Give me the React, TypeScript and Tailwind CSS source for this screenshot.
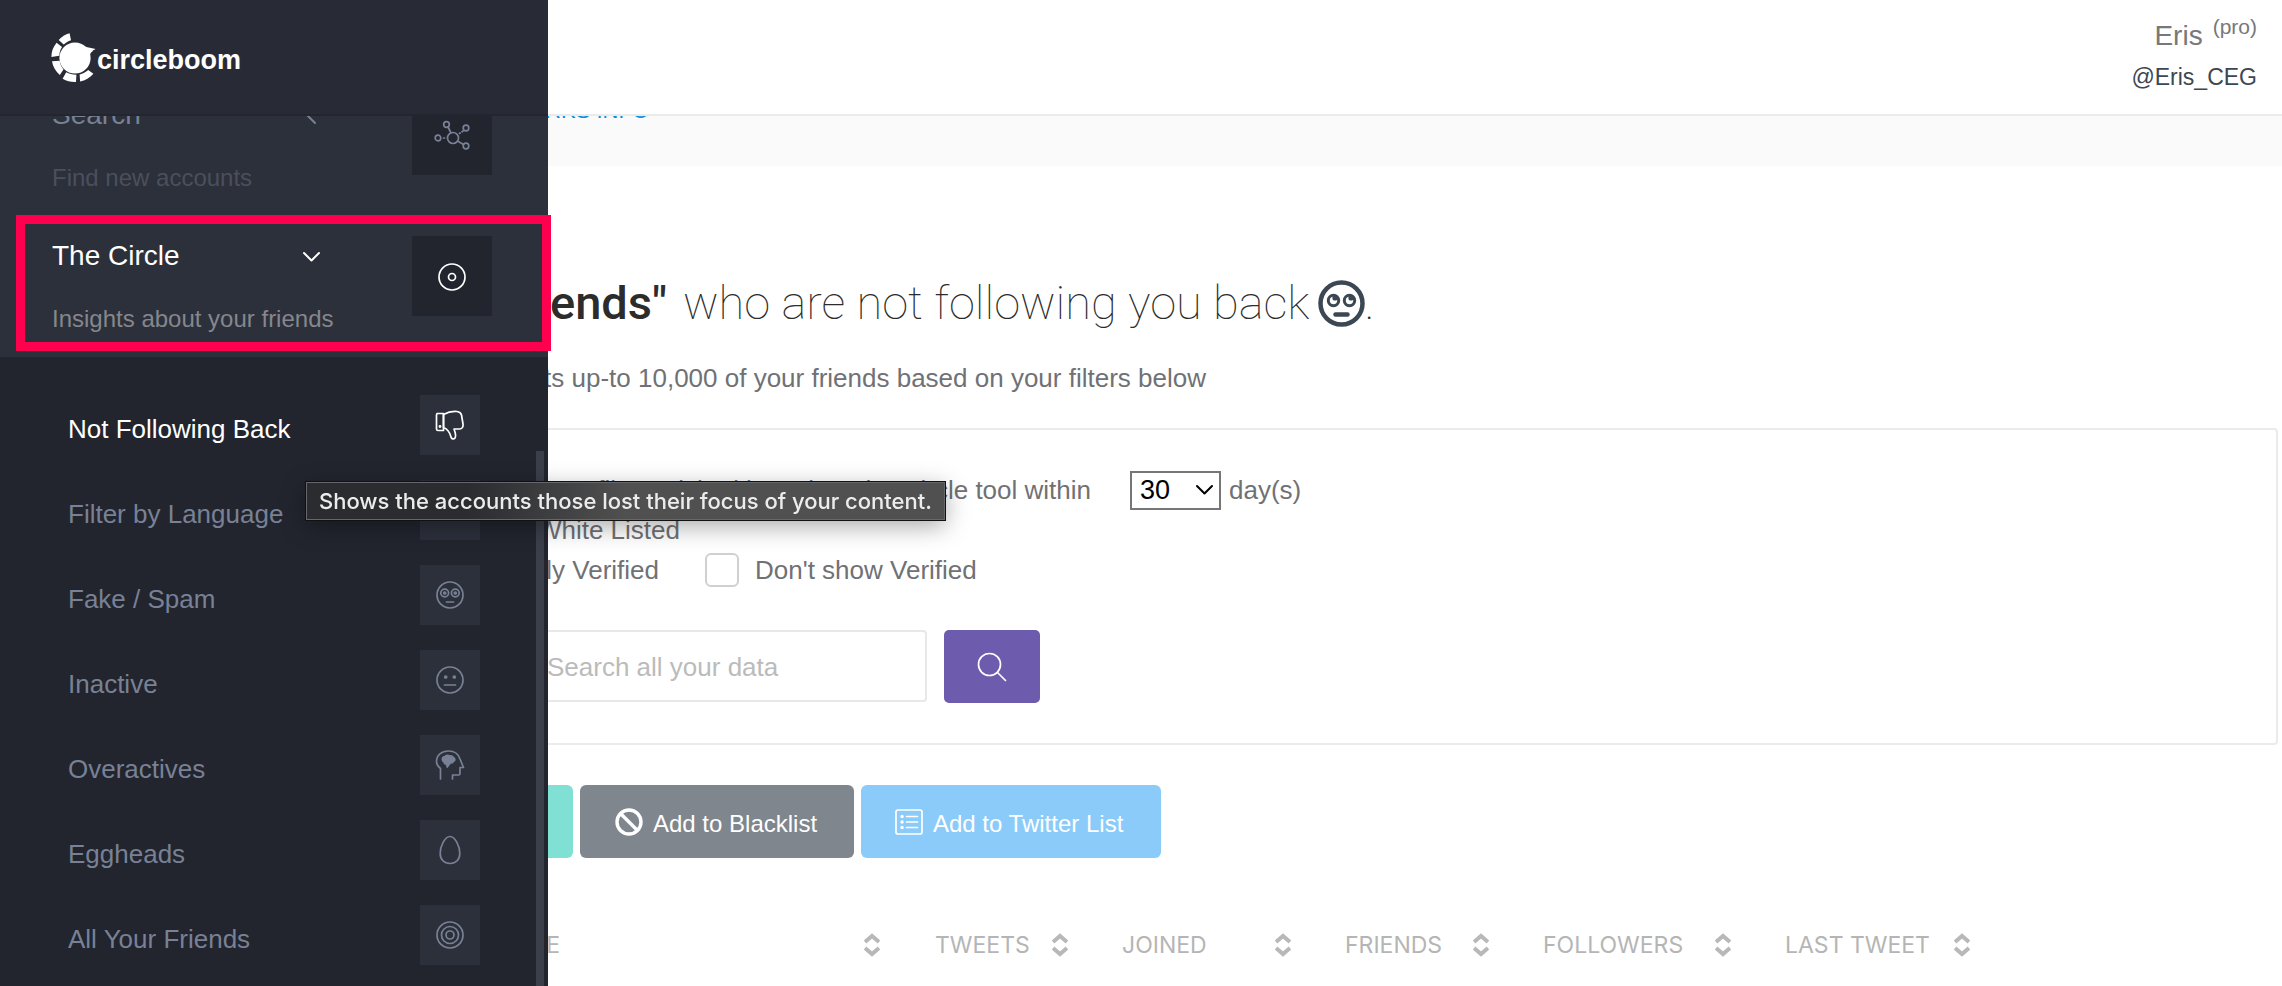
import { ReactNode } from 'react';

interface IconProps {
  className?: string;
}

const stroke = {
  fill: 'none',
  stroke: 'currentColor',
  strokeWidth: 1.7,
  strokeLinecap: 'round' as const,
  strokeLinejoin: 'round' as const,
};

function LogoMark() {
  return (
    <svg className="w-12 h-[54px] shrink-0" viewBox="0 0 48 54" fill="white">
      <circle cx="26" cy="27" r="15.6" />
      <path d="M33 14.5c3 1.3 7 2 13.5 3.500c-1.500 1-3.500 1.200-3 2.500c-1.800 1-2.700 2.500-2.800 4.500z" />
      <path d="M20.600 2.300 22 9.200c-3 .9-5 2.200-7.300 4.400l-5-4.600c3-3.300 6.500-5.700 10.900-6.700z" />
      <path d="M7.600 11.800l5.400 4.200c-1.700 2.800-2.500 5.300-2.700 8.700l-7.900 1.300c0-5.400 1.800-10.200 5.200-14.200z" />
      <path d="M3 30.300l7.600-.6c.6 3.500 1.800 6.200 3.900 8.700l-3.700 5.600c-4.200-3.700-6.900-8.300-7.800-13.700z" />
      <path d="M17.200 41.200c2.900 1.600 6.300 2.500 10.200 2.500l-.4 7.400c-5 .2-9.200-.9-13.400-3.300z" />
      <path d="M30.600 43.400c3.400-.8 6-2.200 8.600-4.500l5.200 3.800c-3.600 4.200-8 6.800-13.300 7.900z" />
    </svg>
  );
}

function NetworkIcon() {
  return (
    <svg className="w-9 h-8" viewBox="0 0 36 32" {...stroke}>
      <circle cx="19" cy="18" r="5.500" />
      <circle cx="4" cy="18" r="2.800" />
      <circle cx="12.500" cy="4.500" r="2.800" />
      <circle cx="32" cy="8" r="2.800" />
      <circle cx="32" cy="26" r="2.800" />
      <path d="M14 7l3 6M23.500 21l6 3.500M9.500 18h1M25.500 13.500l.6-.5M28 11.800l1-.8" />
    </svg>
  );
}

function DiscIcon() {
  return (
    <svg className="w-7 h-7" viewBox="0 0 28 28" {...stroke}>
      <circle cx="14" cy="14" r="13" />
      <circle cx="14" cy="14" r="3.500" />
    </svg>
  );
}

function ThumbDownIcon() {
  return (
    <svg className="w-[30px] h-[30px]" viewBox="0 0 30 30" {...stroke}>
      <path d="M2 3.500h6.500v17H3a1.500 1.500 0 0 1-1.500-1.500V5z" />
      <path d="M8.500 4.500C13 2 17 1 22 1.500c2.500.3 4 1.500 4.500 3.500l1.500 9c.4 3-1 5-3.500 5H19c1.500 4 2.500 6.500 1 9-1.300 1.700-3.500 1-4-1-1-4-3.500-8-7.500-9.500z" />
      <circle cx="5" cy="16.500" r="0.600" />
    </svg>
  );
}

function LanguageIcon() {
  return (
    <svg className="w-[18px] h-[18px]" viewBox="0 0 28 28" {...stroke}>
      <circle cx="14" cy="14" r="13" />
      <path d="M1 14h26M14 1c-8 8-8 18 0 26M14 1c8 8 8 18 0 26" />
    </svg>
  );
}

function SpamIcon() {
  return (
    <svg className="w-7 h-7" viewBox="0 0 28 28" {...stroke}>
      <circle cx="14" cy="14" r="13" />
      <circle cx="8.700" cy="12" r="3.900" />
      <circle cx="19.300" cy="12" r="3.900" />
      <circle cx="8.700" cy="12" r="1" />
      <circle cx="19.300" cy="12" r="1" />
      <path d="M10.500 21h7" />
    </svg>
  );
}

function InactiveIcon() {
  return (
    <svg className="w-7 h-7" viewBox="0 0 28 28" {...stroke}>
      <circle cx="14" cy="14" r="13" />
      <circle cx="9.700" cy="11" r="1" fill="currentColor" />
      <circle cx="18.300" cy="11" r="1" fill="currentColor" />
      <path d="M8.500 19h11" />
    </svg>
  );
}

function HeadIcon() {
  return (
    <svg className="w-[30px] h-[30px]" viewBox="0 0 30 30" {...stroke}>
      <path d="M5.500 29V18.500C3 16.500 1.500 14.500 1.500 11.500C1.500 5 6.500 1 13.500 1C20 1 23.500 4 25 9l3.500 8.500H25v6c0 1-.5 1.500-1.500 1.500H17.500v4" />
      <path
        d="M7.500 10c-.5-2.500 1-3.500 2.500-3.500c1-1.500 3.500-1.500 4.500-.5c2-.5 3.500.5 3.700 1.500c2.300.7 2 3.500.2 4c-.6 1.500-2.400 1.500-3.200 1.500l-3 4-.5-3c-1 0-2.500-.5-2.500-2c-1-.3-1.700-1-1.700-2z"
        fill="currentColor"
      />
    </svg>
  );
}

function EggIcon() {
  return (
    <svg className="w-[22px] h-[30px]" viewBox="0 0 22 30" {...stroke}>
      <path d="M11 1.500C6 1.500 1.200 11 1.200 18.500C1.200 24.500 5 28.500 11 28.500S20.800 24.500 20.800 18.500C20.800 11 16 1.500 11 1.500z" />
    </svg>
  );
}

function TargetIcon() {
  return (
    <svg className="w-7 h-7" viewBox="0 0 28 28" {...stroke}>
      <circle cx="14" cy="14" r="13" />
      <circle cx="14" cy="14" r="8.500" />
      <circle cx="14" cy="14" r="4" />
    </svg>
  );
}

function Chevron({ className }: IconProps) {
  return (
    <svg className={`w-[17px] h-[17px] ${className ?? ''}`} viewBox="0 0 17 17" {...stroke} strokeWidth={2}>
      <path d="M1 5l7.500 7.500L16 5" />
    </svg>
  );
}

function EyesFace() {
  return (
    <svg className="w-[47px] h-[47px] ml-2" viewBox="0 0 47 47" fill="none" stroke="#3b4752">
      <circle cx="23.500" cy="23.500" r="21" strokeWidth="4.500" />
      <circle cx="15.500" cy="20.500" r="5.200" strokeWidth="3" />
      <circle cx="31.500" cy="20.500" r="5.200" strokeWidth="3" />
      <circle cx="17" cy="18" r="2.600" fill="#3b4752" stroke="none" />
      <circle cx="33" cy="18" r="2.600" fill="#3b4752" stroke="none" />
      <path d="M17.500 34.500h12" strokeWidth="4.500" strokeLinecap="round" />
    </svg>
  );
}

function SortIcon() {
  return (
    <svg className="w-4 h-6" viewBox="0 0 16 24" fill="none" stroke="#b8b8b8" strokeWidth="4">
      <path d="M1 9L8 3l7 6M1 15l7 6 7-6" />
    </svg>
  );
}

const menu = [
  { title: 'Search', text: 'Find new accounts', icon: <NetworkIcon />, open: false },
  { title: 'The Circle', text: 'Insights about your friends', icon: <DiscIcon />, open: true },
];

const circleMenu: { label: string; icon: ReactNode; active?: boolean }[] = [
  { label: 'Not Following Back', icon: <ThumbDownIcon />, active: true },
  { label: 'Filter by Language', icon: <LanguageIcon /> },
  { label: 'Fake / Spam', icon: <SpamIcon /> },
  { label: 'Inactive', icon: <InactiveIcon /> },
  { label: 'Overactives', icon: <HeadIcon /> },
  { label: 'Eggheads', icon: <EggIcon /> },
  { label: 'All Your Friends', icon: <TargetIcon /> },
];

const columns = [
  { label: 'TWEETS', width: 'w-[187px]' },
  { label: 'JOINED', width: 'w-[223px]' },
  { label: 'FRIENDS', width: 'w-[198px]' },
  { label: 'FOLLOWERS', width: 'w-[242px]' },
  { label: 'LAST TWEET', width: 'w-[239px]' },
];

function Sidebar() {
  return (
    <aside className="fixed inset-y-0 left-0 z-20 w-[548px] bg-[#22252e] overflow-hidden">
      <div className="relative z-10 h-[116px] bg-[#282b36] border-b-2 border-[#23262f] flex items-start pl-[49px] pt-[31px]">
        <a href="#" className="flex items-start">
          <LogoMark />
          <span className="pt-1 font-['Liberation_Sans',sans-serif] font-bold text-[27px] leading-[50px] text-white">circleboom</span>
        </a>
      </div>

      <nav className="-mt-[41px]">
        <ul className="bg-[#2c303b]">
          {menu.map((item) => (
            <li key={item.title} className="h-[141px] pl-[52px] pr-14 pt-5">
              <a href="#" className="flex justify-between">
                <div className="w-[268px]">
                  <div className={`flex items-center justify-between text-[28px] leading-10 ${item.open ? 'text-white' : 'text-[#788195]'}`}>
                    {item.title}
                    <Chevron className={item.open ? '' : 'rotate-90'} />
                  </div>
                  <div className={`mt-[23px] text-[24px] leading-10 whitespace-nowrap ${item.open ? 'text-[#85878d]' : 'text-[#4b4f5c]'}`}>{item.text}</div>
                </div>
                <span className={`w-20 h-20 pt-[2px] bg-[#22252e] flex items-center justify-center ${item.open ? 'text-white' : 'text-[#788195]'}`}>
                  {item.icon}
                </span>
              </a>
            </li>
          ))}
        </ul>
        <ul className="pt-[38px] px-[68px] flex flex-col gap-[25px]">
          {circleMenu.map((item) => (
            <li key={item.label}>
              <a href="#" className={`flex items-center justify-between ${item.active ? 'text-white' : 'text-[#788195]'}`}>
                <span className="text-[26px] leading-[52px] pt-2">{item.label}</span>
                <span className="w-[60px] h-[60px] bg-[#2c303b] flex items-center justify-center">{item.icon}</span>
              </a>
            </li>
          ))}
        </ul>
      </nav>

      <div className="absolute right-1 top-[451px] bottom-0 w-2 bg-[#3a3f4a]" />
    </aside>
  );
}

function Header() {
  return (
    <header className="fixed top-0 inset-x-0 z-10 h-[116px] bg-white border-b-2 border-[#ebebeb] flex justify-end pr-[25px] pt-[15px]">
      <div className="text-right">
        <div className="flex justify-end items-start gap-[10px] text-[#77787b]">
          <span className="text-[28px] leading-[42px]">Eris</span>
          <span className="text-[21px] leading-[24px]">(pro)</span>
        </div>
        <a href="#" className="block text-[23px] leading-10 text-[#3b4752]">@Eris_CEG</a>
      </div>
    </header>
  );
}

function Filters() {
  return (
    <form className="mt-[30px] mr-1 border-2 border-[#ebebeb] rounded-sm pt-10 pb-10 text-[26px] leading-10">
      <div className="flex items-start">
        <label htmlFor="days" className="w-[849px] text-right">Don't show profiles I visited by using The Circle tool within</label>
        <div className="relative ml-[39px] w-[91px] h-[39px]">
          <select id="days" defaultValue="30" className="appearance-none w-full h-full border-2 border-[#767676] bg-white text-black text-[27px] leading-[35px] pl-2">
            <option>30</option>
            <option>60</option>
            <option>90</option>
          </select>
          <Chevron className="absolute right-2 top-[11px] text-black pointer-events-none" />
        </div>
        <span className="ml-2">day(s)</span>
      </div>
      <div className="w-[438px] flex justify-end">
        <label htmlFor="white">Don't show White Listed</label>
        <input id="white" type="checkbox" className="sr-only" />
      </div>
      <div className="flex items-center">
        <div className="w-[417px] flex justify-end">
          <input id="only" type="checkbox" className="sr-only" />
          <label htmlFor="only">Show only Verified</label>
        </div>
        <input id="hide" type="checkbox" className="appearance-none ml-[46px] w-[34px] h-[34px] border-2 border-[#d0d0d0] rounded-md bg-white" />
        <label htmlFor="hide" className="ml-4">Don't show Verified</label>
      </div>
      <div className="mt-10 flex items-start">
        <div className="w-[685px] flex justify-end">
          <input
            type="text"
            aria-label="Search all your data"
            placeholder="Search all your data"
            className="w-[401px] h-[72px] border-2 border-[#e8e8e8] rounded-sm pl-[19px] pt-[2px] placeholder:text-[#bbbbbb]"
          />
        </div>
        <button type="button" aria-label="Search" className="ml-[17px] w-24 h-[73px] rounded-[5px] bg-[#6d5cae] text-white flex items-center justify-center">
          <svg className="w-[30px] h-[30px]" viewBox="0 0 30 30" {...stroke}>
            <circle cx="12.500" cy="12.500" r="11" />
            <path d="M20.500 20.500l8 8" />
          </svg>
        </button>
      </div>
    </form>
  );
}

function Actions() {
  return (
    <div className="mt-10 pl-[33px] flex gap-[7px] text-[24px] text-white">
      <button type="button" className="w-[300px] h-[73px] rounded-md bg-[#80e0d4]">Add to Whitelist</button>
      <button type="button" className="w-[274px] h-[73px] rounded-md bg-[#7f868e] flex items-center pl-[35px] gap-[10px]">
        <svg className="w-7 h-7" viewBox="0 0 28 28" fill="none" stroke="white" strokeWidth="3.400">
          <circle cx="14" cy="14" r="12" />
          <path d="M5.500 5.500l17 17" />
        </svg>
        <span className="pt-1">Add to Blacklist</span>
      </button>
      <button type="button" className="w-[300px] h-[73px] rounded-md bg-[#8bcbfa] flex items-center pl-[34px] gap-[10px]">
        <svg className="w-7 h-7" viewBox="0 0 28 28" {...stroke}>
          <rect x="1" y="2" width="26" height="24" rx="2" />
          <path d="M11.500 8.500h11M11.500 14h11M11.500 19.500h11" />
          <path d="M7 8.500h.1M7 14h.1M7 19.500h.1" strokeWidth="3.400" />
        </svg>
        <span className="pt-1">Add to Twitter List</span>
      </button>
    </div>
  );
}

function FriendsTable() {
  return (
    <table className="mt-[70px] w-full table-fixed font-['Inter','Liberation_Sans',sans-serif] text-[23px] leading-[34px] text-[#b5b5b5]">
      <thead>
        <tr>
          <th className="w-[655px] font-normal pr-[15px]">
            <div className="flex items-center justify-between">
              <span className="w-[320px] text-right">NAME</span>
              <SortIcon />
            </div>
          </th>
          {columns.map((col) => (
            <th key={col.label} className={`${col.width} font-normal pl-10 pr-[14px]`}>
              <div className="flex items-center justify-between whitespace-nowrap">
                {col.label}
                <SortIcon />
              </div>
            </th>
          ))}
          <th />
        </tr>
      </thead>
    </table>
  );
}

export default function App() {
  return (
    <div className="min-h-screen bg-white overflow-hidden font-['Liberation_Sans',Arial,sans-serif] text-[#707175]">
      <Header />
      <Sidebar />

      <main>
        <div className="h-[166px] bg-[#fafafa] pt-[95px]">
          <a href="#" className="block w-[649px] text-right text-[22px] leading-8 text-[#0a8fdc]">HOW IT WORKS INFO</a>
        </div>
        <div className="pl-[240px]">
          <h1 className="mt-[101px] flex items-center text-[47px] leading-[72px] text-[#2c2c2c] font-['Roboto',sans-serif] font-thin whitespace-nowrap">
            <strong className="w-[427px] text-right font-medium">"Friends"</strong>
            <span className="ml-4">who are not following you back</span>
            <EyesFace />
            <span>.</span>
          </h1>
          <p className="mt-[19px] w-[966px] text-right text-[26px] leading-10 whitespace-nowrap">Search results up-to 10,000 of your friends based on your filters below</p>
          <Filters />
          <Actions />
          <FriendsTable />
        </div>
      </main>

      {/* highlight around the opened menu group */}
      <div className="fixed z-30 left-4 top-[215px] w-[535px] h-[136px] border-[9px] border-[#ff004f] pointer-events-none" />

      <div
        role="tooltip"
        className="fixed z-30 left-[306px] top-[482px] h-[38px] px-3 border border-[#66676a] bg-linear-to-r from-[#2b2c30] from-25% to-[#505050] to-50% shadow-[0_0_0_1px_#111,0_6px_24px_rgba(0,0,0,0.35)] font-['Inter',sans-serif] font-medium text-[22px] leading-9 text-[#ececec] whitespace-nowrap"
      >
        Shows the accounts those lost their focus of your content.
      </div>
    </div>
  );
}
